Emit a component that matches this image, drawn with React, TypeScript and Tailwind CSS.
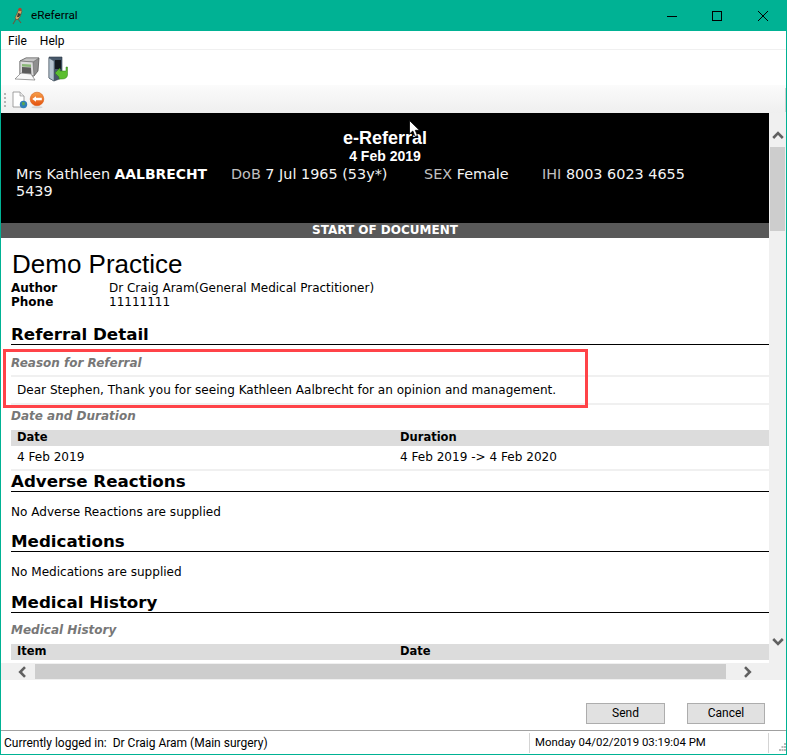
const verdana = 'font-["DejaVu_Sans",sans-serif]';

function SectionTitle({ children }: { children: string }) {
  return (
    <h2 className="ml-[10px] border-b border-black text-[16.7px] leading-[19px] font-bold text-black">{children}</h2>
  );
}

function SubTitle({ children }: { children: string }) {
  return <h3 className="ml-[10px] text-[12px] leading-[16px] font-bold italic text-[#777777]">{children}</h3>;
}

function TableHead({ left, right }: { left: string; right: string }) {
  return (
    <div className="ml-[10px] flex h-[16px] items-center bg-[#dcdcdc] pl-[6px] text-[11.5px] font-bold text-black">
      <span className="w-[383px]">{left}</span>
      <span>{right}</span>
    </div>
  );
}

// Scrollbar arrow: rotate 0 = up, 90 = right, 180 = down, 270 = left
function ScrollArrow({ rotate }: { rotate: number }) {
  return (
    <svg width="12" height="12" viewBox="0 0 12 12" style={{ transform: `rotate(${rotate}deg)` }}>
      <path d="M1.2 9 L6 4.2 L10.8 9" fill="none" stroke="#606060" strokeWidth="2.6" />
    </svg>
  );
}

function AppIcons() {
  return (
    <div className="flex h-[35px] items-center gap-[8px] pl-[13px] pt-[2px]">
      <svg width="26" height="25" viewBox="0 0 26 25">
        <path d="M6 5 L12 2 L25 2 L24 15 L20 20 L6 18 Z" fill="#8f8f8f" stroke="#4c4c4c" strokeWidth="0.7" />
        <path d="M6 5 L19 6 L25 2 L12 2 Z" fill="#c4c4c4" stroke="#5c5c5c" strokeWidth="0.5" />
        <path d="M6 5 L19 6 L20 20 L6 18 Z" fill="#dcdcdc" stroke="#666" strokeWidth="0.6" />
        <path d="M8 8 L17 8.6 L17 11 L8 10.5 Z" fill="#8ab878" />
        <path d="M8 11 L17 11.6 L17.4 18 L8 17 Z" fill="#5c5c5c" />
        <path d="M7 17 L17 18 L21 24 L1 23 Z" fill="#fafafa" stroke="#777" strokeWidth="0.7" />
      </svg>
      <svg width="20" height="26" viewBox="0 0 20 26">
        <path d="M1 1 H14 V22 L6 25 L1 22 Z" fill="#47586a" stroke="#2e3a46" strokeWidth="0.6" />
        <path d="M1 2 L6 5 V25 L1 22 Z" fill="#b5c3cf" stroke="#4b5a68" strokeWidth="0.6" />
        <path d="M7 4 H13 V13 H7 Z" fill="#141a20" />
        <path d="M7 17 L12 12 V15 H18 V11 H19.5 V19 Q19 23 14 23 H11 V21 Z" fill="#5cbe30" stroke="#2f7d16" strokeWidth="0.5" />
      </svg>
    </div>
  );
}

function QuickIcons() {
  return (
    <div className="flex h-[28px] items-center bg-gradient-to-b from-[#fbfbfb] to-[#efefef] pl-[3px] pt-[1px]">
      <div className="flex h-[14px] flex-col justify-between">
        <span className="h-[2px] w-[2px] bg-[#b5b5b5]" />
        <span className="h-[2px] w-[2px] bg-[#b5b5b5]" />
        <span className="h-[2px] w-[2px] bg-[#b5b5b5]" />
        <span className="h-[2px] w-[2px] bg-[#b5b5b5]" />
      </div>
      <svg className="ml-[6px]" width="16" height="18" viewBox="0 0 16 18">
        <path d="M1 1 H8 L12 5 V16 H1 Z" fill="#fff" stroke="#8a8a8a" strokeWidth="0.8" />
        <path d="M8 1 V5 H12" fill="#e8e8e8" stroke="#8a8a8a" strokeWidth="0.6" />
        <circle cx="11.5" cy="13.5" r="3.7" fill="#2f7fb8" />
        <path d="M10 11 L13 11.5 L12.5 14 L10.5 14.5 Z" fill="#5aa84a" />
      </svg>
      <svg className="ml-[1px]" width="16" height="18" viewBox="0 0 16 18">
        <defs>
          <linearGradient id="orangeBall" x1="0" y1="0" x2="0" y2="1">
            <stop offset="0" stopColor="#f7a04a" />
            <stop offset="1" stopColor="#e4500e" />
          </linearGradient>
        </defs>
        <circle cx="8" cy="8" r="6.8" fill="url(#orangeBall)" stroke="#d95c12" strokeWidth="0.6" />
        <path d="M3.2 8 L7 5.2 V6.8 H12.8 V9.2 H7 V10.8 Z" fill="#fff" />
        <ellipse cx="8" cy="16.2" rx="5.5" ry="1" fill="#d4d4d4" />
      </svg>
      <span className="ml-auto h-[24px] w-px bg-[#cfcfcf]" />
    </div>
  );
}

function SizeGrip() {
  return (
    <svg className="mb-[-8px] ml-[10px]" width="7" height="8" viewBox="0 0 7 8" fill="#b8b8b8">
      <rect x="5" y="0" width="2" height="2" />
      <rect x="2.5" y="3" width="2" height="2" />
      <rect x="5" y="3" width="2" height="2" />
      <rect x="0" y="6" width="2" height="2" />
      <rect x="2.5" y="6" width="2" height="2" />
      <rect x="5" y="6" width="2" height="2" />
    </svg>
  );
}

export default function App() {
  return (
    <div className='flex h-[755px] w-[787px] flex-col overflow-hidden border-x border-b border-[#00b294] bg-white font-["Roboto",sans-serif]'>
      {/* Title bar */}
      <div className="-mx-px flex h-[31px] shrink-0 items-center bg-[#00b294] text-black">
        <svg className="ml-[12px]" width="12" height="18" viewBox="0 0 12 18">
          <path d="M7 2 L10 4 L8 10 L5 13 L3 11 Z" fill="#cfa96a" stroke="#5a4a30" strokeWidth="0.6" />
          <path d="M6 6 L9 7 L7 10 L5 10 Z" fill="#3d3a34" />
          <circle cx="8" cy="2.5" r="1.7" fill="#b5402c" />
          <path d="M4 12 L1 17 M6 12 L9 16" stroke="#6b5a40" strokeWidth="1.1" />
        </svg>
        <span className="ml-[7px] text-[11.7px]">eReferral</span>
        <div className="ml-auto flex items-center">
          <svg width="10" height="10" viewBox="0 0 10 10" shapeRendering="crispEdges" className="mr-[35px]">
            <rect x="0" y="5" width="10" height="1" fill="#000" />
          </svg>
          <svg width="10" height="10" viewBox="0 0 10 10" shapeRendering="crispEdges" className="mr-[36px]">
            <rect x="0.5" y="0.5" width="9" height="9" fill="none" stroke="#000" />
          </svg>
          <svg width="10" height="10" viewBox="0 0 10 10" className="mr-[19px]">
            <path d="M0 0 L10 10 M10 0 L0 10" stroke="#000" strokeWidth="1" />
          </svg>
        </div>
      </div>

      {/* Menu */}
      <div className="flex h-[19px] shrink-0 items-center gap-[13px] border-b border-[#f0f0f0] pl-[7px] pt-[2px] text-[12px] text-black">
        <span>File</span>
        <span>Help</span>
      </div>

      <AppIcons />
      <QuickIcons />

      {/* Document viewer */}
      <div className="flex h-[550px] shrink-0">
        <div className={`h-full w-[768px] overflow-hidden ${verdana} text-[12px] text-black`}>
          <div className="relative flex h-[110px] flex-col bg-black pt-[15px] text-white">
            <div className='text-center font-["Liberation_Sans",sans-serif] text-[18px] leading-[20px] font-bold'>
              e-Referral
            </div>
            <div className='text-center font-["Liberation_Sans",sans-serif] text-[14px] leading-[16px] font-bold'>
              4 Feb 2019
            </div>
            <div className="mt-[2px] px-[15px] text-[14.4px] leading-[17px] text-[#f4f4f4]">
              <div className="flex">
                <span className="w-[215px]">
                  Mrs Kathleen <b className="text-[13.9px] text-white">AALBRECHT</b>
                </span>
                <span className="w-[193px]">
                  <span className="text-[#c0c0c0]">DoB</span> 7 Jul 1965 (53y*)
                </span>
                <span className="w-[118px]">
                  <span className="text-[#c0c0c0]">SEX</span> Female
                </span>
                <span>
                  <span className="text-[#c0c0c0]">IHI</span> 8003 6023 4655
                </span>
              </div>
              <div>5439</div>
            </div>
            {/* Mouse pointer caught in the screenshot */}
            <svg className="absolute left-[408px] top-[7px]" width="12" height="18" viewBox="0 0 12 18">
              <path d="M0.5 0.5 V14 L3.8 11 L6 16.5 L8.5 15.5 L6.3 10.3 H10.5 Z" fill="#fff" stroke="#000" strokeWidth="0.8" />
            </svg>
          </div>
          <div className="h-[15px] bg-[#595959] text-center text-[12px] leading-[15px] font-bold text-white">
            START OF DOCUMENT
          </div>

          <div className='ml-[11px] mt-[11px] font-["Liberation_Sans",sans-serif] text-[26px] leading-[31px]'>
            Demo Practice
          </div>
          <div className="ml-[10px] mt-[1px] flex text-[12px] leading-[14px]">
            <b className="w-[98px]">Author</b>
            <span>Dr Craig Aram(General Medical Practitioner)</span>
          </div>
          <div className="ml-[10px] flex text-[12px] leading-[14px]">
            <b className="w-[98px]">Phone</b>
            <span>11111111</span>
          </div>

          <div className="mt-[16px]">
            <SectionTitle>Referral Detail</SectionTitle>
          </div>
          <div className="relative mt-[10px]">
            <SubTitle>Reason for Referral</SubTitle>
            <div className="ml-[10px] mt-[4px] border-y-2 border-[#f0f0f0] pl-[6px] text-[12.07px] leading-[26px]">
              Dear Stephen, Thank you for seeing Kathleen Aalbrecht for an opinion and management.
            </div>
            {/* Annotation box over the content */}
            <div className="absolute -top-[6px] left-[2px] h-[59px] w-[585px] border-[3px] border-[#ff4348]" />
          </div>
          <div className="mt-[3px]">
            <SubTitle>Date and Duration</SubTitle>
          </div>
          <div className="mt-[6px]">
            <TableHead left="Date" right="Duration" />
            <div className="ml-[10px] flex h-[25px] items-center border-b-2 border-[#f0f0f0] pl-[6px] text-[12.07px]">
              <span className="w-[383px]">4 Feb 2019</span>
              <span>4 Feb 2019 -&gt; 4 Feb 2020</span>
            </div>
          </div>
          <div className="mt-[1px]">
            <SectionTitle>Adverse Reactions</SectionTitle>
          </div>
          <div className="ml-[10px] mt-[12px] text-[12.07px] leading-[16px]">No Adverse Reactions are supplied</div>
          <div className="mt-[12px]">
            <SectionTitle>Medications</SectionTitle>
          </div>
          <div className="ml-[10px] mt-[12px] text-[12.07px] leading-[16px]">No Medications are supplied</div>
          <div className="mt-[13px]">
            <SectionTitle>Medical History</SectionTitle>
          </div>
          <div className="mt-[9px]">
            <SubTitle>Medical History</SubTitle>
          </div>
          <div className="mt-[6px]">
            <TableHead left="Item" right="Date" />
          </div>
        </div>

        {/* Vertical scrollbar */}
        <div className="flex w-[17px] flex-col bg-[#f0f0f0]">
          <div className="flex h-[34px] items-end justify-center pb-[6px]">
            <ScrollArrow rotate={0} />
          </div>
          <div className="ml-px mr-px h-[84px] bg-[#cdcdcd]" />
          <div className="mb-[15px] mt-auto flex justify-center">
            <ScrollArrow rotate={180} />
          </div>
        </div>
      </div>

      {/* Horizontal scrollbar */}
      <div className="flex h-[17px] shrink-0 items-center bg-[#f0f0f0]">
        <div className="flex h-full w-[34px] items-center justify-center pl-[8px]">
          <ScrollArrow rotate={270} />
        </div>
        <div className="h-[15px] w-[691px] bg-[#cdcdcd]" />
        <div className="flex h-full w-[43px] items-center justify-center">
          <ScrollArrow rotate={90} />
        </div>
      </div>

      {/* Actions */}
      <div className="flex h-[50px] shrink-0 items-start justify-end gap-[22px] pr-[21px] pt-[23px]">
        <button className="h-[21px] w-[79px] border border-[#adadad] bg-[#e1e1e1] text-[12px] leading-[19px] text-black">
          Send
        </button>
        <button className="h-[21px] w-[78px] border border-[#adadad] bg-[#e1e1e1] text-[12px] leading-[19px] text-black">
          Cancel
        </button>
      </div>

      {/* Status bar */}
      <div className="flex h-[24px] shrink-0 items-center border-t border-[#a0a0a0] text-[12px] text-black">
        <span className="w-[528px] pl-[3px]">Currently logged in:&nbsp; Dr Craig Aram (Main surgery)</span>
        <span className="flex h-[20px] w-[240px] items-center border-x border-[#d4d4d4] pl-[5px] text-[11.4px]">
          Monday 04/02/2019 03:19:04 PM
        </span>
        <SizeGrip />
      </div>
    </div>
  );
}
